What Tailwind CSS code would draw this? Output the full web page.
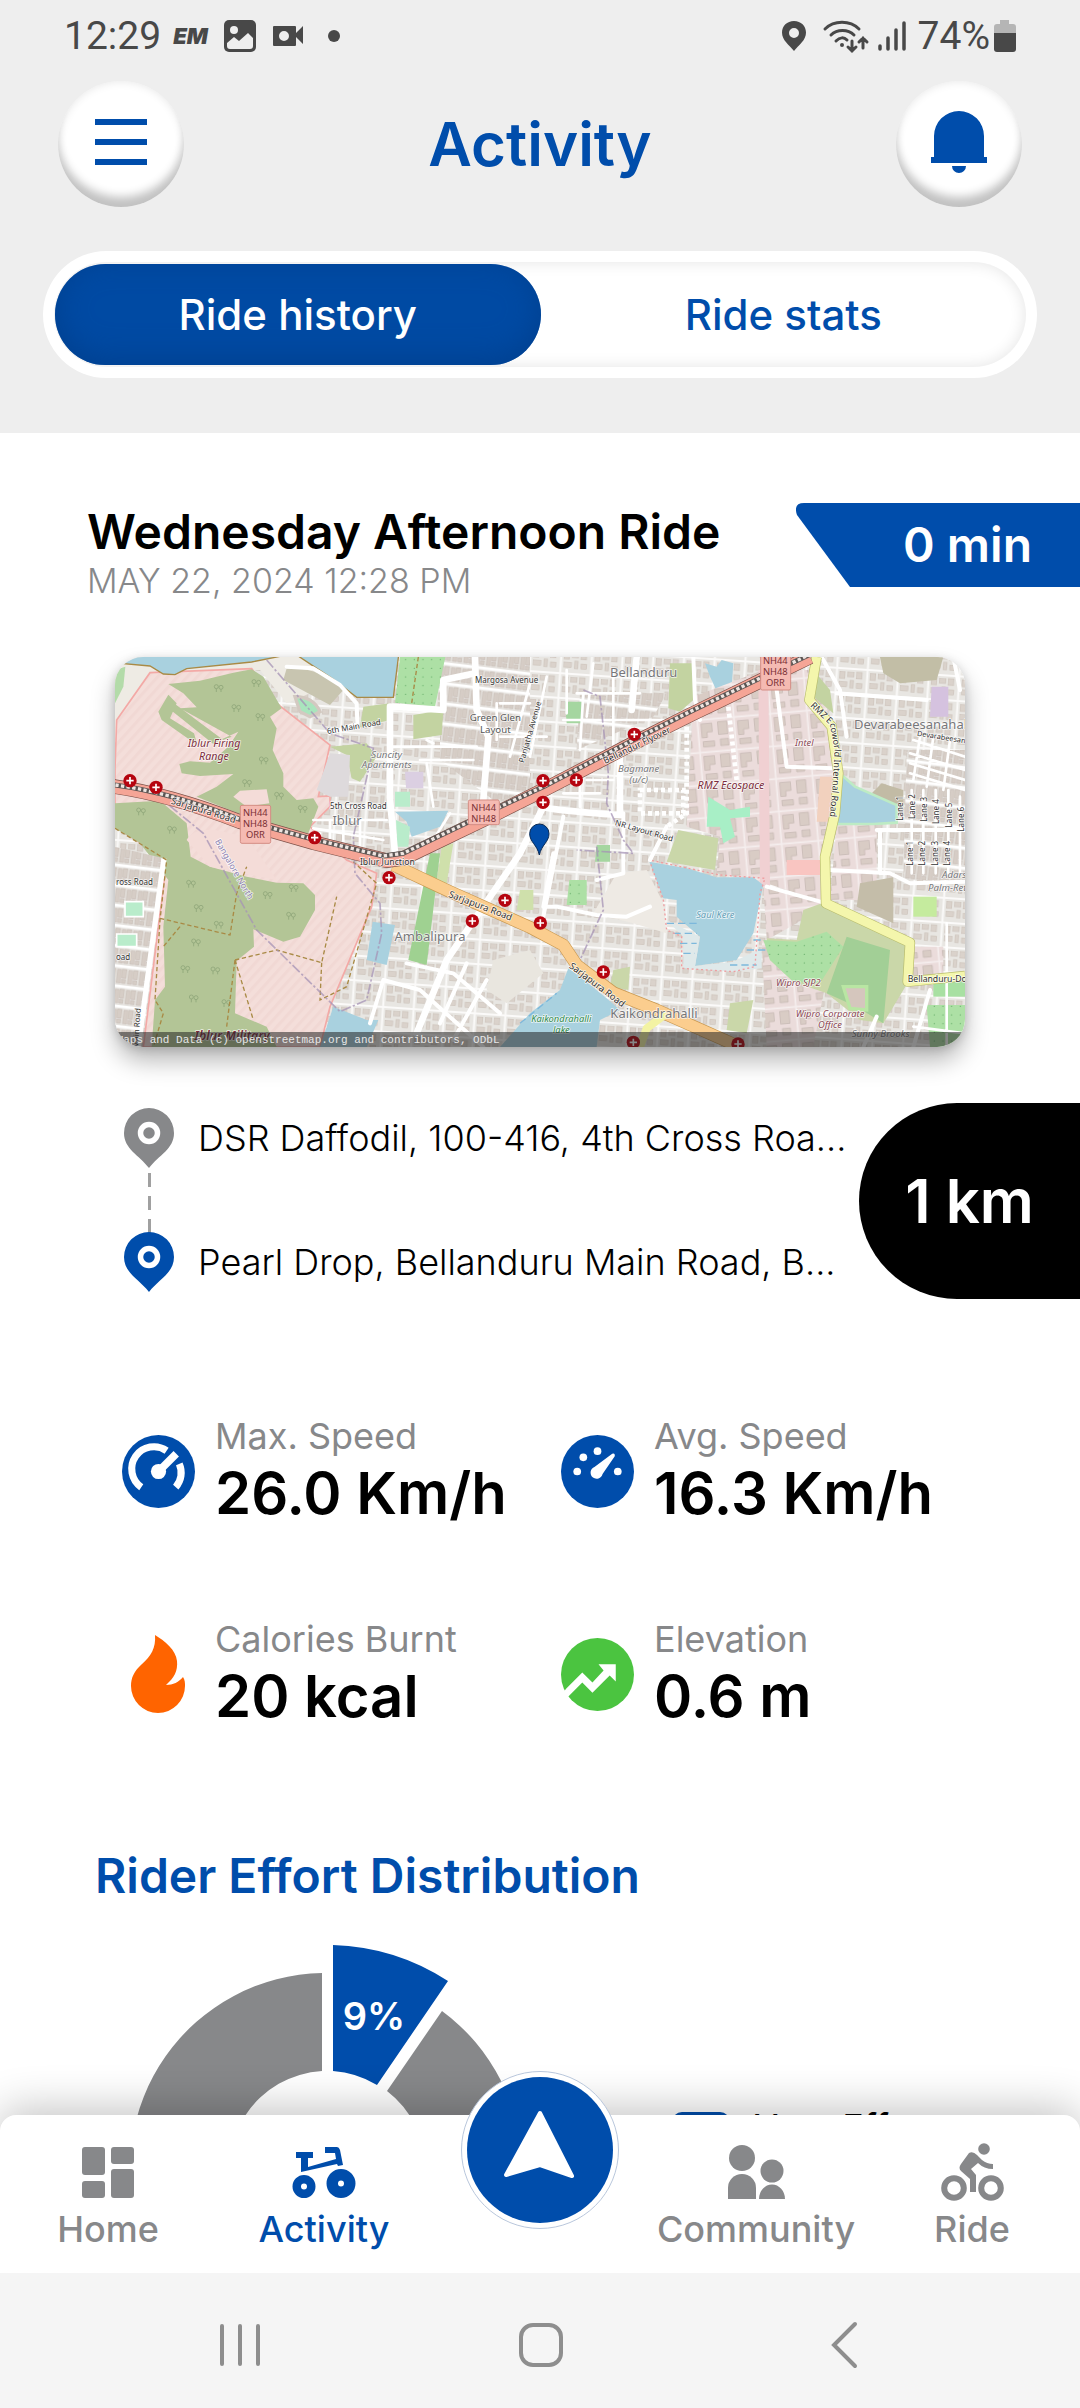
<!DOCTYPE html>
<html lang="en">
<head>
<meta charset="utf-8">
<meta name="viewport" content="width=device-width, initial-scale=1">
<title>Activity</title>
<script src="https://cdn.jsdelivr.net/npm/@tailwindcss/browser@4"></script>
</head>
<body class="flex h-screen flex-col overflow-hidden bg-white font-['Inter',sans-serif] text-black">

<header class="bg-[#eeeeee] pb-[55px]">
  <!-- Status bar -->
  <div class="flex h-[72px] items-center justify-between pr-16 pl-16 font-['Roboto',sans-serif] text-[39px] leading-none text-[#484848]">
    <div class="flex items-center">
      <span>12:29</span>
      <span class="ml-3 font-['Inter',sans-serif] text-[22px] font-black italic">EM</span>
      <svg class="ml-4 h-8 w-8" viewBox="0 0 32 32" aria-hidden="true"><rect width="32" height="32" rx="5" fill="#484848"/><circle cx="10" cy="10" r="4" fill="#eee"/><path d="M3 23l7-6 5 4 9-8 5 5v8a3 3 0 0 1-3 3H6a3 3 0 0 1-3-3z" fill="#eee"/></svg>
      <svg class="ml-4 h-6 w-8" viewBox="0 0 32 24" aria-hidden="true"><path fill-rule="evenodd" d="M2 2h21a1 1 0 0 1 1 1v6l7-7v18l-7-7v8a1 1 0 0 1-1 1H2a1 1 0 0 1-1-1V3a1 1 0 0 1 1-1zm10 5a5 5 0 1 0 0 10 5 5 0 0 0 0-10z" fill="#484848"/></svg>
      <span class="ml-6 h-3 w-3 rounded-full bg-[#484848]"></span>
    </div>
    <div class="flex items-center">
      <svg class="h-8 w-6" viewBox="0 0 24 32" aria-hidden="true"><path fill-rule="evenodd" d="M12 1C5 1 0 6 0 12.500c0 8 7 12 12 18.500 5-6.500 12-10.500 12-18.500C24 6 19 1 12 1zm0 7a5 5 0 1 1 0 10 5 5 0 0 1 0-10z" fill="#484848"/></svg>
      <svg class="ml-4 h-9 w-12" viewBox="0 0 48 36" fill="none" stroke="#484848" stroke-width="3" stroke-linecap="round" aria-hidden="true"><path d="M3 11c9-9 25-9 34 0M9 17c6-6 17-6 23 0M14 23c4-4 8-4 11-1"/><circle cx="20" cy="27" r="2" fill="#484848" stroke="none"/><path d="M30 23v10m-4-4l4 4 4-4M41 30V20m-4 4l4-4 4 4"/></svg>
      <svg class="ml-2 h-8 w-7" viewBox="0 0 28 32" fill="none" stroke="#484848" stroke-width="3.500" stroke-linecap="round" aria-hidden="true"><path d="M2 26v3M10 18v11M18 10v19M26 3v26"/></svg>
      <span class="ml-3">74%</span>
      <svg class="ml-1 h-8 w-[22px]" viewBox="0 0 22 32" aria-hidden="true"><path d="M6 0h9v4h4a3 3 0 0 1 3 3v6H0V7a3 3 0 0 1 3-3h3z" fill="#b5b5b5"/><path d="M0 13h22v16a3 3 0 0 1-3 3H3a3 3 0 0 1-3-3z" fill="#484848"/></svg>
    </div>
  </div>

  <!-- Title bar -->
  <div class="flex items-center justify-between px-[58px] pt-[9px]">
    <button type="button" aria-label="Menu" class="flex h-[126px] w-[126px] items-center justify-center rounded-full bg-white pb-1 shadow-[inset_0_-12px_10px_-2px_#c2c2c2,inset_0_0_10px_#e6e6e6]">
      <svg class="h-[46px] w-[52px]" viewBox="0 0 52 46" aria-hidden="true"><path d="M0 0h52v6H0zM0 20h52v6H0zM0 40h52v6H0z" fill="#004dab"/></svg>
    </button>
    <h1 class="text-[60px] leading-[68px] font-semibold text-[#004dab]">Activity</h1>
    <button type="button" aria-label="Notifications" class="flex h-[126px] w-[126px] items-center justify-center rounded-full bg-white pb-1 shadow-[inset_0_-12px_10px_-2px_#c2c2c2,inset_0_0_10px_#e6e6e6]">
      <svg class="h-[62px] w-[58px]" viewBox="0 0 58 62" aria-hidden="true"><path d="M4 46V25a25 25 0 0 1 50 0v21h3v6H1v-6zM22 55h14a7 7 0 0 1-14 0z" fill="#004dab"/></svg>
    </button>
  </div>

  <!-- Tabs -->
  <div class="mx-[43px] mt-11 rounded-full bg-white p-[11px]">
    <div role="tablist" class="grid h-[105px] grid-cols-2 rounded-full bg-white py-[2px] pl-px text-[42px] font-medium shadow-[inset_0_0_16px_#e4e4e4]">
      <button type="button" role="tab" aria-selected="true" class="rounded-full bg-[#004aa3] text-white shadow-[inset_0_-6px_30px_#00408f]">Ride history</button>
      <button type="button" role="tab" aria-selected="false" class="text-[#004dab]">Ride stats</button>
    </div>
  </div>
</header>

<main class="min-h-0 flex-1 overflow-hidden pt-[70px]">
  <div class="flex items-start justify-between pl-[87px]">
    <div class="pt-1">
      <h2 class="text-[48px] leading-[50px] font-semibold whitespace-nowrap">Wednesday Afternoon Ride</h2>
      <p class="text-[34px] leading-[48px] font-light text-[#87888a]">MAY 22, 2024 12:28 PM</p>
    </div>
    <div class="relative flex h-[84px] w-[284px] shrink-0 items-center justify-end pr-12">
      <svg class="absolute inset-0 h-full w-full" viewBox="0 0 284 84" preserveAspectRatio="none" aria-hidden="true"><path d="M8 0H284V84H54L1 12Q-3 0 8 0z" fill="#004dab"/></svg>
      <span class="relative text-[48px] leading-[50px] font-semibold text-white">0 min</span>
    </div>
  </div>

  <!-- Map -->
  <div class="mx-[115px] mt-[52px] overflow-hidden rounded-[28px] shadow-[0_14px_24px_rgba(0,0,0,0.28),0_2px_10px_rgba(0,0,0,0.15)]">
    <svg class="block h-auto w-full" viewBox="45 51 2550 1170" font-family="Noto Sans, sans-serif" role="img" aria-label="Map of the ride around Bellanduru and Iblur">
      <defs>
        <pattern id="blocks" width="92" height="74" patternUnits="userSpaceOnUse" patternTransform="rotate(4)">
          <rect width="92" height="74" fill="#e8e6e2"/>
          <g fill="#dad2cb" stroke="#c8bdb4" stroke-width="1.500"><rect x="13" y="13" width="16" height="20"/><rect x="37" y="14" width="19" height="13"/><rect x="64" y="12" width="16" height="20"/><rect x="14" y="43" width="22" height="15"/><rect x="45" y="38" width="11" height="22"/><rect x="65" y="45" width="17" height="15"/></g>
          <path d="M0 3H92M4 0V74" stroke="#fbfaf9" stroke-width="6"/>
        </pattern>
        <pattern id="rows" width="34" height="60" patternUnits="userSpaceOnUse" patternTransform="rotate(7)">
          <rect width="34" height="60" fill="#e6e3df"/>
          <path d="M3 14H15V54H3zM18 12H31V38H18zM19 42H30V54H19z" fill="#d6cdc6" stroke="#c4b9b0" stroke-width="1.500"/>
          <path d="M0 4H34" stroke="#fff" stroke-width="8"/>
        </pattern>
        <pattern id="campus" width="110" height="98" patternUnits="userSpaceOnUse" patternTransform="rotate(-5)">
          <rect width="110" height="98" fill="#ebdcdb"/>
          <path d="M14 16h32v26H30v16H14zM64 14h28v38H64zM16 70h34v16H16zM68 66h24v20H68z" fill="#d9ccc5" stroke="#c2b5ae" stroke-width="2"/>
          <path d="M0 4H110M4 0V98" stroke="#f5eeee" stroke-width="5"/>
        </pattern>
        <pattern id="hatch" width="22" height="22" patternUnits="userSpaceOnUse" patternTransform="rotate(42)"><rect width="22" height="22" fill="#f4deda"/><rect width="9" height="22" fill="#f1d8d4"/></pattern>
        <pattern id="grove" width="26" height="26" patternUnits="userSpaceOnUse"><rect width="26" height="26" fill="#ade0a5"/><circle cx="7" cy="7" r="2" fill="#6db36f"/></pattern>
        <g id="hospital"><circle r="20" fill="#b5040f"/><path d="M-11 0H11M0-11V11" stroke="#fff" stroke-width="5"/></g>
        <g id="tree" fill="none" stroke="#8fa67a" stroke-width="2.500"><circle cx="-6" cy="-5" r="6"/><circle cx="8" cy="-3" r="6"/><path d="M-6 1V11M8 3V11"/></g>
      </defs>
      <rect x="45" y="51" width="2550" height="1170" fill="url(#blocks)"/>
      <path d="M1020 51H1290V470L1180 480 1020 360z" fill="url(#rows)"/>
      <path d="M1440 160H1700L1660 230 1430 330z" fill="url(#rows)"/>
      <path d="M1550 700L1640 690 1690 790 1700 880 1600 850 1480 820z" fill="#eeeae4"/>
      <path d="M1180 960L1290 930 1330 1000 1220 1090 1160 1050z" fill="#e9e6df"/>

      <!-- Firing range and woods -->
      <path d="M45 51H620L700 130 560 190 480 90 150 98 50 300H45z" fill="#eeebe4"/>
      <path d="M45 90L76 80 70 140 45 190z" fill="#b3dba9"/>
      <path d="M150 98L455 86 530 190 690 315 655 470 690 468V500L630 560 740 660 830 700 815 800 690 1100 660 1221H130L200 660 45 560V385L50 240z" fill="url(#hatch)" stroke="#f3a9a6" stroke-width="5"/>
      <path d="M205 132L300 122 400 98 455 88 490 110 545 205 510 230 530 265 518 330 550 400V440L590 480 640 475 655 500 625 580 520 562 290 470 350 440 400 402 300 408 245 400 238 372 270 364 330 368 385 320 415 275 360 300 340 312 200 200 225 192 370 300 395 290 240 205 290 202 250 160z" fill="#b3c596"/>
      <path d="M205 164L175 215 185 240 270 300 292 315 282 280 210 235 230 190z" fill="#b3c596"/>
      <path d="M420 452L500 448 508 490 440 500 400 470z" fill="#f4dcd8"/>
      <path d="M45 490L180 482 260 550 272 650 330 680 440 710 530 728 610 730 645 765V810L600 890 550 905 460 868 462 920 410 962 405 1120 500 1160 530 1221H155L165 1080 195 1040 190 860 205 720 120 610 45 565z" fill="#b3c596"/>
      <path d="M260 600Q280 565 345 570L440 590 530 720 330 680z" fill="#f4dcd8"/>
      <g><use href="#tree" x="355" y="145"/><use href="#tree" x="408" y="205"/><use href="#tree" x="480" y="232"/><use href="#tree" x="490" y="362"/><use href="#tree" x="440" y="430"/><use href="#tree" x="536" y="468"/><use href="#tree" x="607" y="508"/><use href="#tree" x="122" y="515"/><use href="#tree" x="215" y="570"/><use href="#tree" x="272" y="732"/><use href="#tree" x="295" y="805"/><use href="#tree" x="355" y="855"/><use href="#tree" x="287" y="908"/><use href="#tree" x="255" y="988"/><use href="#tree" x="345" y="992"/><use href="#tree" x="280" y="1076"/><use href="#tree" x="378" y="1090"/><use href="#tree" x="502" y="766"/><use href="#tree" x="572" y="828"/><use href="#tree" x="580" y="745"/><use href="#tree" x="468" y="130"/></g>
      <path d="M45 620L192 655 150 960 115 1221H45z" fill="url(#rows)"/>
      <path d="M75 785h55v45H75zM50 882h60v38H50z" fill="#b9eccb" stroke="#fff" stroke-width="5"/>
      <path d="M192 655L150 960 115 1221" stroke="#fff" stroke-width="16" fill="none"/>

      <!-- Water -->
      <g fill="#a9d1df" stroke="#a98a45" stroke-width="4">
        <path d="M40 45H560L455 66 260 86 225 104 190 102 150 78 40 68z"/>
        <path d="M590 45H896L880 172H770L700 118z"/>
      </g>
      <g fill="#a9d1df">
        <path d="M885 515L1045 512 1020 560 935 590 920 545z"/>
        <path d="M818 845L885 855 860 975 800 960z"/>
        <path d="M700 1100L800 1140H835L800 1221H660z"/>
        <path d="M1405 985L1440 1010 1520 1075 1560 1110 1500 1140 1490 1221H1200L1290 1120 1380 1050z"/>
        <path d="M1815 70L1850 80 1865 60 1900 70 1895 140 1850 152 1830 110z"/>
      </g>

      <!-- Parks and fields -->
      <path d="M900 51H1036L1005 200 885 188z" fill="url(#grove)"/>
      <path d="M790 200L870 190V240L780 262zM690 320L800 310 830 350 780 425 755 415 740 345zM940 225L1030 210 1025 285 940 298z" fill="#c3d3a1"/>
      <path d="M560 85Q660 80 730 150L690 195 550 120z" fill="#c8c5b0"/>
      <path d="M585 170Q640 170 660 215L630 230 600 215z" fill="#a9e5bd" stroke="#d3c9c1" stroke-width="10"/>
      <path d="M690 340L750 345 745 470H690L650 450z" fill="#dedadc"/>
      <path d="M990 640L1020 640 980 975 925 960z" fill="#9fd191"/>
      <path d="M885 455H930V500H885zM888 540L930 560 925 620H892z" fill="#b9eccb"/>
      <path d="M915 395H970V445H918z" fill="#dbcfe2"/>
      <path d="M1025 620L1060 610 1035 760H1005zM1260 750H1300V810H1250z" fill="#cfe0ab"/>
      <path d="M1710 70H1780V180L1740 215 1705 205z" fill="#c3d3a1"/>
      <path d="M1395 185H1445V250H1400zM1490 615H1530V665H1485z" fill="#a5d6a0"/>
      <path d="M1408 720H1460V795H1400z" fill="url(#grove)"/>
      <path d="M1735 570L1855 595 1845 690 1700 665z" fill="#cad7a9"/>
      <path d="M1540 990L1590 980 1585 1050 1530 1040zM1890 1090L1960 1080 1940 1180 1880 1170z" fill="#cad7a9"/>

      <!-- Tech parks -->
      <path d="M1780 170L1990 90H2130L2200 250 2215 500 2175 790 2000 730 1850 700 1860 590 1760 560z" fill="url(#campus)"/>
      <path d="M1990 740L2170 790 2090 850 2000 900z" fill="url(#campus)"/>
      <path d="M1985 900L2110 1000 2180 1010 2140 1221H2000z" fill="url(#campus)"/>
      <path d="M2210 555H2330V780H2190z" fill="url(#campus)"/>
      <path d="M2440 920H2530V1010H2435z" fill="url(#campus)"/>
      <path d="M1990 90L1995 740" stroke="#f0d0d2" stroke-width="30"/>
      <path d="M1825 470L1890 510 1950 500V530L1890 535 1905 590 1870 610 1860 560 1820 560z" fill="#a8efc6"/>
      <path d="M2060 660H2160V705H2060z" fill="#f9c5c1"/>
      <path d="M2160 410H2200V545H2150z" fill="#f2d1be"/>
      <path d="M2000 895L2090 900 2110 810 2165 790 2430 915 2425 1025 2350 1150 2280 1140 2180 1060 2080 1025 2010 960z" fill="#cad7a9"/>
      <path d="M1990 900L2090 905 2180 875 2230 920 2160 1030 2080 1025 2010 960z" fill="url(#grove)"/>
      <path d="M2240 890L2370 930 2350 1150 2270 1100 2180 1060z" fill="#a2cf96"/>
      <path d="M2230 1040H2300V1110L2250 1105z" fill="#d5c6bd" stroke="#b9e6a3" stroke-width="10"/>
      <path d="M2280 730L2380 712V850L2270 800z" fill="#c4bda9"/>
      <path d="M2340 51H2530L2510 120 2400 130 2350 100z" fill="#c2bea6"/>
      <path d="M2345 430L2410 450V500L2310 465z" fill="#c2bba5"/>
      <path d="M2140 90L2190 150 2200 220 2140 170z" fill="#c3d3a1"/>
      <path d="M2495 140H2545V230H2490z" fill="#d5c2df"/>
      <path d="M2440 770H2510V830H2440z" fill="#c5eb9e"/>
      <path d="M2480 1095H2595V1221H2490z" fill="url(#grove)"/>
      <path d="M2500 1020H2595V1070H2500z" fill="#a8e0a2"/>
      <path d="M2420 330H2595V720H2410z" fill="url(#rows)"/>

      <!-- Saul Kere and the eastern lake -->
      <path d="M1648 665L1760 685 1850 712H1960L1990 735 1960 880 1910 960 1785 978 1800 890 1730 830V780L1690 775z" fill="#a9d1df"/>
      <path d="M2225 405L2265 440 2390 495V548L2320 552H2210z" fill="#a9d1df" stroke="#bdebc4" stroke-width="8"/>
      <path d="M1700 840L1800 890 1785 978 1900 965 1985 925V985L1900 995 1750 985V890z" fill="#dfe9ea"/>
      <path d="M1700 850H1790M1720 880H1790M1740 910H1790M1750 940H1785M1960 900H1990M1940 930H2000M1890 975H1970M1260 1150L1370 1060" stroke="#7cb8dc" stroke-width="4" stroke-dasharray="22 12"/>
      <path d="M1648 660L1690 780 1700 870 1745 890V985L1900 995 1965 980 1980 760 1995 715 1860 705z" fill="none" stroke="#ef9da0" stroke-width="4" stroke-dasharray="6 8"/>

      <!-- Streets -->
      <g fill="none" stroke="#fff" stroke-linejoin="round" stroke-linecap="round">
        <path stroke-width="20" d="M870 200V480L885 640M880 200L1030 210V120L1125 100M1125 51L1130 210 1165 290 1150 480M1610 51L1595 210M1330 500Q1350 510 1560 525M1560 350V520M1330 500L1260 640 1150 800 1040 960 950 1180"/>
        <path stroke-width="12" d="M560 80L640 85 720 135 770 190 772 250 690 280M1360 640L1330 800M1390 530L1330 830M1330 800L1370 800 1490 825 1580 830 1650 800M1780 51L1785 180 1800 240M2000 740L2180 790M2190 690L2370 700 2430 730 2595 725M2165 51L2220 150 2240 290M2560 51L2580 150M2210 160L2480 180M2330 570H2595M2340 570V700M1700 560L1650 660M1570 520V700L1490 720M850 1020L960 1050 1150 1221M920 970L1060 1000 1200 1120M1100 970L1020 1150M1160 1020L1060 1200M850 1020L810 1150M2030 150L2060 380 2200 385M2490 1050L2440 1221M2330 1130L2290 1221"/>
        <path stroke-width="8" d="M640 540H860M640 565L850 600M660 580L640 620M690 540V600M730 540V610M780 540V620M1200 190H1290M1200 290H1340M1190 190V300M1290 130L1230 350M1340 110L1290 350M1390 240H1700M1430 160H1620M1450 160L1440 330M980 370L1000 500M1000 310L980 300M1400 90V220M1480 70L1460 230M1540 90V340M1460 420H1540M1390 460H1500M1440 380V500M870 320H1130M960 360H1120M1050 520L1000 600 950 640M2440 300L2595 350M2430 340L2595 390M2430 370L2595 420M2430 400L2595 450M2460 290L2440 420M2500 290L2480 440M2550 300L2530 450M2435 450V700M2470 450V700M2507 450V700M2545 450V700M2580 470V700M2540 850V1221M2440 1160L2595 1180"/>
      </g>
      <g fill="none" stroke="#ffffff" stroke-width="14" stroke-dasharray="12 9"><path d="M1885 200L1910 420M1760 260V520L1700 560M1620 450H1750V520H1620z"/></g>
      <g fill="none" stroke="#a98a45" stroke-width="4" stroke-dasharray="13 8">
        <path d="M45 565L200 660 180 840 165 1080 190 1120 160 1221M180 835L390 885 410 760 440 680M405 960L530 930 665 968 710 770M665 968L660 1080 740 1040 830 730 760 665M405 960L460 1140M240 860L190 920M955 51L935 190M405 960L380 1160"/>
      </g>
      <path d="M500 60L690 280 820 325 760 590 765 700 840 790 845 880 800 1080 720 1115 470 870 310 580 200 490M1450 150L1500 170 1525 400 1520 490 1570 600 1600 640 1430 630M1490 620L1510 810 1440 960" fill="none" stroke="#a693b5" stroke-width="5" stroke-dasharray="30 7 7 7" opacity=".75"/>

      <!-- Main roads -->
      <g fill="none" stroke-linejoin="round">
        <path d="M880 675L1050 755 1290 862 1390 915 1430 975 1540 1058 1670 1110 1760 1150 1920 1221" stroke="#c9984f" stroke-width="38"/>
        <path d="M880 675L1050 755 1290 862 1390 915 1430 975 1540 1058 1670 1110 1760 1150 1920 1221" stroke="#fbcd8e" stroke-width="34"/>
        <path d="M1620 1221L1640 1165 1700 1120" stroke="#f3f3a3" stroke-width="24"/>
        <path d="M2150 51L2128 180 2195 260 2215 400 2205 520 2175 650 2178 790 2430 908 2423 1025 2595 1008" stroke="#b9bd6d" stroke-width="31"/>
        <path d="M2150 51L2128 180 2195 260 2215 400 2205 520 2175 650 2178 790 2430 908 2423 1025 2595 1008" stroke="#f4f6ac" stroke-width="27"/>
        <path d="M30 438Q200 460 420 545L640 608 860 662 910 655 1200 515 1330 450 1600 310 1770 225 2130 51" stroke="#7c5048" stroke-width="44"/>
        <path d="M30 438Q200 460 420 545L640 608 860 662 910 655 1200 515 1330 450 1600 310 1770 225 2130 51" stroke="#f5a596" stroke-width="40"/>
        <path d="M30 433Q200 453 420 538L640 598 850 648 910 640 1200 500 1330 440 1600 300 1770 215 2130 43" stroke="#5b5654" stroke-width="15"/>
        <path d="M30 433Q200 453 420 538L640 598 850 648 910 640 1200 500 1330 440 1600 300 1770 215 2130 43" stroke="#eee5e1" stroke-width="10" stroke-dasharray="10 7"/>
      </g>

      <!-- Road shields -->
      <g fill="#f5bab2" stroke="#d48d84" stroke-width="3"><rect x="421" y="496" width="91" height="114" rx="5"/><rect x="1105" y="480" width="93" height="74" rx="5"/><rect x="1982" y="40" width="90" height="110" rx="5"/></g>
      <g font-size="28" fill="#7a2f35" text-anchor="middle"><text x="466" y="529">NH44</text><text x="466" y="562">NH48</text><text x="466" y="595">ORR</text><text x="1151" y="514">NH44</text><text x="1151" y="546">NH48</text><text x="2026" y="73">NH44</text><text x="2026" y="105">NH48</text><text x="2026" y="138">ORR</text></g>

      <!-- Place names -->
      <g text-anchor="middle" stroke="#fff" stroke-opacity=".75" stroke-width="5" paint-order="stroke" stroke-linejoin="round">
        <g font-size="39" fill="#77777a"><text x="741" y="554">Iblur</text><text x="990" y="902">Ambalipura</text><text x="1631" y="110">Bellanduru</text><text x="1662" y="1133">Kaikondrahalli</text><text x="2262" y="266" text-anchor="start">Devarabeesanahalli</text></g>
        <g font-size="29" fill="#555"><text x="1186" y="243">Green Glen</text><text x="1186" y="278">Layout</text></g>
        <g font-size="29" fill="#77777a" font-style="italic"><text x="860" y="353">Suncity</text><text x="860" y="385">Apartments</text><text x="1616" y="396">Bagmane</text><text x="1616" y="428">(u/c)</text><text x="2526" y="713" text-anchor="start">Adarsh</text><text x="2484" y="753" text-anchor="start">Palm-Retreat</text><text x="2342" y="1190">Sunny Brooks</text></g>
        <g font-size="32" fill="#7c2d3c" font-style="italic"><text x="342" y="320">Iblur Firing</text><text x="342" y="360">Range</text><text x="396" y="1200" font-size="37" font-weight="600">Iblur Military</text><text x="1893" y="446">RMZ Ecospace</text></g>
        <g font-size="28" fill="#8a4754" font-style="italic"><text x="2113" y="319">Intel</text><text x="2095" y="1038">Wipro SJP2</text><text x="2190" y="1131">Wipro Corporate</text><text x="2190" y="1164">Office</text></g>
        <g font-size="28" font-style="italic"><text x="1846" y="834" fill="#5d9db5">Saul Kere</text><text x="1384" y="1146" fill="#2f8a4c">Kaikondrahalli</text><text x="1384" y="1179" fill="#2f8a4c">lake</text></g>
        <g font-size="24" fill="#333">
          <text transform="translate(763 268) rotate(-10)">6th Main Road</text><text x="775" y="508">5th Cross Road</text><text x="1220" y="130">Margosa Avenue</text>
          <text transform="translate(1298 278) rotate(-74)">Parijatha Avenue</text><text x="862" y="674" font-size="26">Iblur Junction</text>
          <text transform="translate(308 520) rotate(17)" font-size="28">Sarjapura Road</text><text transform="translate(1138 806) rotate(21)" font-size="28">Sarjapura Road</text>
          <text transform="translate(1486 1042) rotate(37)" font-size="28">Sarjapura Road</text><text transform="translate(1614 324) rotate(-26)" font-size="27">Bellandur Flyover</text>
          <text transform="translate(1630 580) rotate(16)">NR Layout Road</text><text transform="translate(2450 287) rotate(9)" text-anchor="start" font-size="22">Devarabeesanahalli</text>
          <text x="48" y="735" text-anchor="start">ross Road</text><text x="48" y="960" text-anchor="start">oad</text><text transform="translate(118 1165) rotate(-86)">Main Road</text>
          <text x="2423" y="1026" text-anchor="start" font-size="26">Bellanduru-Doddakannelli</text>
          <text transform="translate(2408 505) rotate(-90)">Lane 1</text><text transform="translate(2445 500) rotate(-90)">Lane 2</text><text transform="translate(2482 508) rotate(-90)">Lane 3</text><text transform="translate(2517 515) rotate(-90)">Lane 4</text><text transform="translate(2556 525) rotate(-90)">Lane 5</text><text transform="translate(2592 538) rotate(-90)">Lane 6</text>
          <text transform="translate(2440 640) rotate(-90)">Lane 1</text><text transform="translate(2476 640) rotate(-90)">Lane 2</text><text transform="translate(2513 640) rotate(-90)">Lane 3</text><text transform="translate(2551 640) rotate(-90)">Lane 4</text>
        </g>
        <text transform="translate(395 692) rotate(60)" font-size="26" fill="#8b7fb0">Bangalore North</text>
        <path id="ecoworld" d="M2130 198L2190 255 2204 330 2198 440 2186 570" fill="none" stroke="none"/>
        <text font-size="27" fill="#333" text-anchor="start"><textPath href="#ecoworld">RMZ Ecoworld Internal Road</textPath></text>
      </g>
      <g><use href="#hospital" x="90" y="422"/><use href="#hospital" x="168" y="442"/><use href="#hospital" x="644" y="593"/><use href="#hospital" x="867" y="713"/><use href="#hospital" x="1215" y="781"/><use href="#hospital" x="1117" y="843"/><use href="#hospital" x="1321" y="849"/><use href="#hospital" x="1329" y="422"/><use href="#hospital" x="1329" y="487"/><use href="#hospital" x="1429" y="420"/><use href="#hospital" x="1603" y="283"/><use href="#hospital" x="1510" y="996"/><use href="#hospital" x="1600" y="1207"/><use href="#hospital" x="1914" y="1212"/></g>
      <path d="M1318 645C1312 615 1289 606 1289 581a29 29 0 0 1 58 0c0 25-23 34-29 64z" fill="#004dab" stroke="#082a55" stroke-width="3"/>
      <rect x="45" y="1176" width="2550" height="45" fill="#222" fill-opacity=".55"/>
      <text x="50" y="1209" font-family="Liberation Mono, monospace" font-size="33" fill="#e6e6e6">Maps and Data (c) openstreetmap.org and contributors, ODbL</text>
    </svg>
  </div>

  <!-- Start and end of the ride -->
  <div class="mt-14 flex items-start">
    <ol class="flex min-w-0 flex-1 flex-col gap-16 pt-[5px] pl-[124px] text-[36px] leading-[60px] font-light whitespace-nowrap">
      <li class="relative flex h-[60px] items-center gap-6">
        <svg class="h-[60px] w-[50px] shrink-0" viewBox="0 0 50 60" aria-hidden="true"><path d="M25 0a25 25 0 0 0-25 25c0 16 15 22 25 35 10-13 25-19 25-35A25 25 0 0 0 25 0z" fill="#87888a"/><circle cx="25" cy="25" r="8.500" fill="none" stroke="#fff" stroke-width="5.500"/></svg>
        <span class="absolute top-[65px] left-[24px] h-[60px] w-[3px] bg-[repeating-linear-gradient(#a0a0a0_0_14px,transparent_14px_23px)]"></span>
        <span>DSR Daffodil, 100-416, 4th Cross Roa...</span>
      </li>
      <li class="flex h-[60px] items-center gap-6">
        <svg class="relative h-[60px] w-[50px] shrink-0" viewBox="0 0 50 60" aria-hidden="true"><path d="M25 0a25 25 0 0 0-25 25c0 16 15 22 25 35 10-13 25-19 25-35A25 25 0 0 0 25 0z" fill="#004dab"/><circle cx="25" cy="25" r="8.500" fill="none" stroke="#fff" stroke-width="5.500"/></svg>
        <span>Pearl Drop, Bellanduru Main Road, B...</span>
      </li>
    </ol>
    <div class="flex h-[196px] w-[221px] shrink-0 items-center justify-center rounded-l-full bg-black text-[60px] font-semibold text-white">1 km</div>
  </div>

  <!-- Ride figures -->
  <dl class="mt-[115px] grid grid-cols-[439px_1fr] gap-y-[89px] pl-[122px]">
    <div class="flex items-center gap-5">
      <svg class="h-[73px] w-[73px] shrink-0" viewBox="0 0 72 72" aria-hidden="true"><circle cx="36" cy="36" r="36" fill="#004dab"/><g fill="none" stroke="#fff" stroke-width="7"><path d="M19 51.500A21.500 21.500 0 0 1 44 15.500"/><path d="M56.500 28.500A21.500 21.500 0 0 1 53 51.500"/><path d="M36 36L53.500 18.500" stroke-width="7.500"/></g><circle cx="36" cy="36" r="7.500" fill="#fff"/></svg>
      <div><dt class="text-[36px] leading-[44px] text-[#87888a]">Max. Speed</dt><dd class="text-[58px] leading-[70px] font-semibold whitespace-nowrap">26.0 Km/h</dd></div>
    </div>
    <div class="flex items-center gap-5">
      <svg class="h-[73px] w-[73px] shrink-0" viewBox="0 0 72 72" aria-hidden="true"><circle cx="36" cy="36" r="36" fill="#004dab"/><g fill="#fff"><circle cx="16" cy="36" r="3.800"/><circle cx="22" cy="22" r="3.800"/><circle cx="36" cy="16" r="3.800"/><circle cx="56" cy="36" r="3.800"/><path d="M50.500 18.500q3-1 2.500 2.500L41 38.500a6 6 0 1 1-8-7z"/></g></svg>
      <div><dt class="text-[36px] leading-[44px] text-[#87888a]">Avg. Speed</dt><dd class="text-[58px] leading-[70px] font-semibold whitespace-nowrap">16.3 Km/h</dd></div>
    </div>
    <div class="flex items-center gap-5">
      <svg class="h-[78px] w-[73px] shrink-0" viewBox="0 0 73 78" aria-hidden="true"><path d="M33 0c1 13-4 21-13 29C12 36 9 43 9 51a27 27 0 0 0 54 0c0-3 0-6-2-9-4 5-10 8-17 8 8-7 12-14 11-24C54 15 43 6 33 0z" fill="#ff6400"/></svg>
      <div><dt class="text-[36px] leading-[44px] text-[#87888a]">Calories Burnt</dt><dd class="text-[58px] leading-[70px] font-semibold whitespace-nowrap">20 kcal</dd></div>
    </div>
    <div class="flex items-center gap-5">
      <svg class="h-[73px] w-[73px] shrink-0" viewBox="0 0 72 72" aria-hidden="true"><circle cx="36" cy="36" r="36" fill="#4bc440"/><path d="M0 57L5 50 21 34 31 44 42 32 37 26H54V43L48 37 31 54 21 44 7 58 2 62z" fill="#fff"/></svg>
      <div><dt class="text-[36px] leading-[44px] text-[#87888a]">Elevation</dt><dd class="text-[58px] leading-[70px] font-semibold whitespace-nowrap">0.6 m</dd></div>
    </div>
  </dl>

  <h2 class="mt-[120px] pl-[95px] text-[48px] leading-[50px] font-semibold text-[#004dab]">Rider Effort Distribution</h2>
  <div class="mt-11 flex items-start gap-[121px] pl-[103px]">
    <svg class="h-[448px] w-[448px] shrink-0" viewBox="0 0 448 448" role="img" aria-label="Rider effort 9%">
      <path d="M219 28A196 196 0 1 0 339 66L284 146A98 98 0 1 1 219 126z" fill="#87888a"/>
      <path d="M230 0A224 224 0 0 1 345 36L274 140A98 98 0 0 0 230 126z" fill="#004dab"/>
      <text x="271" y="85" text-anchor="middle" font-size="38" font-weight="600" fill="#fff">9%</text>
    </svg>
    <div class="mt-[167px] flex items-start gap-6">
      <span class="h-10 w-[58px] rounded-[10px] bg-[#004dab]"></span>
      <span class="-mt-[10px] text-[36px] leading-[50px]">Your Effort</span>
    </div>
  </div>
</main>

<!-- Bottom navigation -->
<nav class="relative z-10 -mt-4 rounded-t-[16px] bg-white shadow-[0_-6px_44px_rgba(0,0,0,0.24)]">
  <div class="grid h-[158px] grid-cols-5 text-[36px] leading-[44px] text-[#87888a]">
    <a href="#home" class="flex flex-col items-center pt-7">
      <svg class="h-14 w-16" viewBox="0 0 64 56" fill="#87888a" aria-hidden="true"><rect x="6" y="4" width="23" height="28" rx="3"/><rect x="6" y="38" width="23" height="17" rx="3"/><rect x="35" y="4" width="23" height="17" rx="3"/><rect x="35" y="26" width="23" height="29" rx="3"/></svg>
      <span class="mt-2 font-medium">Home</span>
    </a>
    <a href="#activity" aria-current="page" class="flex flex-col items-center pt-7 text-[#004dab]">
      <svg class="h-14 w-16" viewBox="0 0 64 56" aria-hidden="true"><path fill-rule="evenodd" fill="#004dab" d="M12 32a11.500 11.500 0 1 0 0 23 11.500 11.500 0 0 0 0-23zm0 8.500a3 3 0 1 1 0 6 3 3 0 0 1 0-6zM49 26a14.500 14.500 0 1 0 0 29 14.500 14.500 0 0 0 0-29zm0 11.500a3 3 0 1 1 0 6 3 3 0 0 1 0-6z"/><path fill="#004dab" d="M4 9h17v6h-5v9l28-8-1-6h-10V4h12q2 0 3 3l3 15-5 1-1-2-36 8V15H4z"/></svg>
      <span class="mt-2 font-medium">Activity</span>
    </a>
    <div class="relative">
      <button type="button" aria-label="Start a ride" class="absolute -top-11 left-1/2 flex h-[158px] w-[158px] -translate-x-1/2 items-center justify-center rounded-full border border-[#b9c7dc] bg-white">
        <svg class="h-[146px] w-[146px]" viewBox="0 0 146 146" aria-hidden="true"><circle cx="73" cy="73" r="73" fill="#004dab"/><path d="M73 36L105 99 73 88 39 98z" fill="#fff" stroke="#fff" stroke-width="4" stroke-linejoin="round"/></svg>
      </button>
    </div>
    <a href="#community" class="flex flex-col items-center pt-7">
      <svg class="h-14 w-16" viewBox="0 0 64 56" fill="#87888a" aria-hidden="true"><circle cx="18" cy="15" r="13"/><path d="M4 56V45a14 14 0 0 1 28 0v11z"/><circle cx="48" cy="28" r="11.500"/><path d="M35 56a12.500 14 0 0 1 26 0z"/></svg>
      <span class="mt-2 font-medium">Community</span>
    </a>
    <a href="#ride" class="flex flex-col items-center pt-7">
      <svg class="h-14 w-16 overflow-visible" viewBox="0 0 64 56" aria-hidden="true"><g fill="none" stroke="#87888a" stroke-width="6"><circle cx="14" cy="45" r="9.800"/><circle cx="51" cy="45" r="9.800"/></g><circle cx="44" cy="6" r="5.800" fill="#87888a"/><path d="M29 10q4-2 8 2l5 5q5 4 11 4v5q-9 0-15-6l-7 6 5 6v17h-6V36L21 28q-3-3 0-7z" fill="#87888a"/></svg>
      <span class="mt-2 font-medium">Ride</span>
    </a>
  </div>
</nav>

<!-- System navigation -->
<div class="relative z-10 flex h-[135px] shrink-0 items-center justify-between bg-[#f5f5f5] px-[210px] pt-2">
  <button type="button" aria-label="Recent apps"><svg class="h-[60px] w-[60px]" viewBox="0 0 60 60" stroke="#8e8e8e" stroke-width="4" stroke-linecap="round" aria-hidden="true"><path d="M12 11V49M30 11V49M48 11V49"/></svg></button>
  <button type="button" aria-label="Home screen"><svg class="h-[60px] w-[60px]" viewBox="0 0 60 60" fill="none" stroke="#8e8e8e" stroke-width="4" aria-hidden="true"><rect x="11" y="10" width="40" height="40" rx="12"/></svg></button>
  <button type="button" aria-label="Back"><svg class="h-[60px] w-[60px]" viewBox="0 0 60 60" fill="none" stroke="#8e8e8e" stroke-width="4" stroke-linecap="round" aria-hidden="true"><path d="M45 9L24 30 45 51"/></svg></button>
</div>
</body>
</html>
